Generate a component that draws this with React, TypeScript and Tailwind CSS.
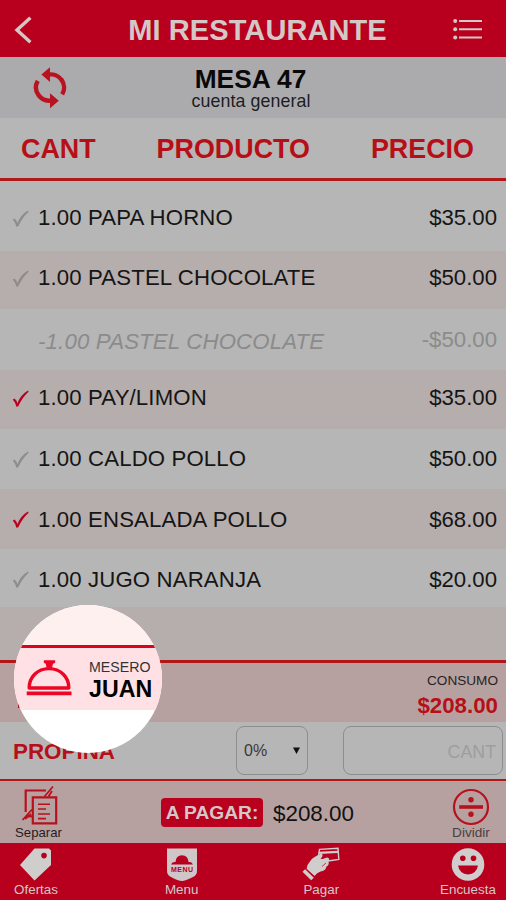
import React from 'react'

const items = [
    { name: '1.00 PAPA HORNO', price: '$35.00', check: 'text-[#8d8d8d]', row: 'h-[70px] bg-[#b6b6b6] pt-[5px]' },
    { name: '1.00 PASTEL CHOCOLATE', price: '$50.00', check: 'text-[#928989]', row: 'h-[58px] bg-[#b6adad] pb-[3px]' },
    { name: '-1.00 PASTEL CHOCOLATE', price: '-$50.00', check: '', row: 'h-[61px] bg-[#b6b6b6] pt-[2px]' },
    { name: '1.00 PAY/LIMON', price: '$35.00', check: 'text-[#b9001f]', row: 'h-[59px] bg-[#b6adad] pb-[2px]' },
    { name: '1.00 CALDO POLLO', price: '$50.00', check: 'text-[#8d8d8d]', row: 'h-[60px] bg-[#b6b6b6] pt-px' },
    { name: '1.00 ENSALADA POLLO', price: '$68.00', check: 'text-[#b9001f]', row: 'h-[60px] bg-[#b6adad] pt-[2px]' },
    { name: '1.00 JUGO NARANJA', price: '$20.00', check: 'text-[#8d8d8d]', row: 'h-[58px] bg-[#b6b6b6] pt-[4px]' },
]

function Check({ className }: { className: string }) {
    return (
        <svg className={className} width="17" height="18" viewBox="0 0 17 18" fill="currentColor">
            <path d="M0.8 9.6 L2.6 8.6 Q4.6 10.4 5.3 13.2 Q9 4.6 16 0.6 L16.6 1.8 Q10.4 7.4 6.3 16.2 L4.4 16.8 Q3 12 0.8 9.6Z" />
        </svg>
    )
}

function Header() {
    return (
        <>
            <header className="grid h-[57px] grid-cols-[100px_1fr_100px] items-center bg-[#b8001e] text-[#d3c8c6]">
                <svg className="ml-[14px] mt-[2px]" width="20" height="28" viewBox="0 0 20 28" fill="none" stroke="currentColor" strokeWidth="3.4">
                    <path d="M16.4 1.8 L3 14 L16.4 26.2" />
                </svg>
                <h1 className="whitespace-nowrap pl-[9px] pt-[4px] text-center text-[29px] font-bold leading-none tracking-[0.1px]">MI RESTAURANTE</h1>
                <svg className="ml-[46px]" width="32" height="24" viewBox="0 0 32 24" fill="currentColor">
                    <circle cx="3.2" cy="4" r="2" />
                    <circle cx="3.2" cy="12.2" r="2" />
                    <circle cx="3.2" cy="20.5" r="2" />
                    <path d="M7 3h23v2H7zM7 11.2h23v2H7zM7 19.4h23v2H7z" />
                </svg>
            </header>

            <div className="grid h-[61px] grid-cols-[100px_1fr_100px] bg-[#ababae]">
                <svg className="ml-[33px] mt-[9px]" width="34" height="44" viewBox="0 0 34 44" fill="none" stroke="#b81321" strokeWidth="4.4">
                    <path d="M15 8.7 A13.2 13.2 0 0 1 29.2 28.4" />
                    <path d="M19 34.3 A13.2 13.2 0 0 1 4.8 14.8" />
                    <path d="M17 1.2 V16 L8.4 8.6Z M17 27.2 V42.3 L25.8 34.8Z" fill="#b81321" stroke="none" />
                </svg>
                <div className="text-center text-[#090909]">
                    <p className="pt-[9px] pr-[5px] text-[26.3px] font-bold leading-[26px]">MESA 47</p>
                    <p className="pr-[4px] text-[17.8px] leading-[18px] tracking-[0.1px] text-[#1d1d1f]">cuenta general</p>
                </div>
            </div>

            <div className="flex h-[63px] justify-between border-b-[3px] border-[#b01719] bg-[#b6b6b6] pl-[21px] pr-[32px] pt-px text-[26.9px] font-bold leading-[60px] text-[#b70f17]">
                <span>CANT</span>
                <span>PRODUCTO</span>
                <span>PRECIO</span>
            </div>
        </>
    )
}

// the highlighted bubble over the dimmed bill
function WaiterSpotlight() {
    return (
        <div className="absolute left-[14px] top-[605px] z-10 h-[148px] w-[148px] overflow-hidden rounded-full bg-white">
            <div className="h-[40px] bg-[#fff0f0]" />
            <div className="flex h-[65px] border-t-[3px] border-[#d9041b] bg-[#ffe1e5]">
                <svg className="ml-[12px] mt-[11px] shrink-0" width="47" height="38" viewBox="0 0 47 38" fill="none" stroke="#ed0525">
                    <path d="M3.2 29 C3 18 11.5 9.6 23 9.6 C34.5 9.6 43 18 42.8 29Z" strokeWidth="3.4" strokeLinejoin="round" />
                    <path d="M0.7 34.3 H45.5" strokeWidth="3.8" />
                    <path d="M18 1.2 H29 Q30.2 4.2 27 4.7 L26 9 H20.6 L19.8 4.7 Q17 4.2 18 1.2Z" fill="#ed0525" stroke="none" />
                </svg>
                <div className="ml-[16px] pt-[12px]">
                    <p className="text-[14.2px] leading-[15px] text-[#333]">MESERO</p>
                    <p className="pt-px text-[23.2px] font-bold leading-[26px] text-black">JUAN</p>
                </div>
            </div>
        </div>
    )
}

function Totals() {
    return (
        <>
            <div className="h-[53px] bg-[#b6adad]" />
            <div className="flex h-[62px] items-end justify-between border-t-[3px] border-[#b01719] bg-[#b7a1a0]">
                <span className="mb-[14px] ml-[18px] h-[4px] w-[3px] bg-[#b70f17]" />
                <div className="h-full pr-[8px] pt-[10px] text-right">
                    <p className="text-[13.6px] leading-[16px] text-[#292223]">CONSUMO</p>
                    <p className="pt-[4px] text-[22.3px] font-bold leading-[26px] text-[#b70f17]">$208.00</p>
                </div>
            </div>
            <div className="flex h-[59px] border-b-2 border-[#b01719] bg-[#b6b6b6] pt-[4px]">
                <span className="w-[236px] pl-[13px] pt-[11px] text-[22.4px] font-bold leading-[30px] text-[#b70f17]">PROPINA</span>
                <div className="flex h-[49px] w-[72px] items-center justify-between rounded-[8px] border-[1.5px] border-[#8c8e8f] px-[7px] text-[16px] text-[#393939]">
                    <span>0%</span>
                    <svg width="7" height="7" viewBox="0 0 7 7">
                        <path d="M0 0.5H7L3.5 7Z" fill="#111" />
                    </svg>
                </div>
                <div className="ml-[35px] flex h-[49px] w-[160px] items-center justify-end rounded-[8px] border-[1.5px] border-[#8c8e8f] pr-[6px] pt-[3px] text-[17.8px] text-[#9d9e9e]">
                    CANT
                </div>
            </div>
        </>
    )
}

function PayBar() {
    return (
        <div className="flex h-[62px] bg-[#b7a1a0]">
            <div className="flex w-[161px] flex-col pl-[15px] pt-[4px] text-[#242021]">
                <svg className="ml-[6px]" width="38" height="41" viewBox="0 0 38 41" fill="none" stroke="#b7111e" strokeWidth="2.2">
                    <path d="M4.7 27 V5.5 H25" />
                    <path d="M6 31.3 H11" />
                    <path d="M11.8 12.3 H35.2 V38.3 H11.8Z" />
                    <path d="M17 19.3H29M17 24H25M17 29H29M17 33.6H25" strokeWidth="1.6" />
                    <path d="M32 1.5 L23.5 11.5 M31 6 L27.5 11.5 M11 24.5 L1.5 35 M10 29 L4 34" strokeWidth="1.8" />
                </svg>
                <span className="text-[13.2px] leading-[14px]">Separar</span>
            </div>
            <div className="mt-[17px] flex h-[29px] w-[102px] items-center justify-center whitespace-nowrap rounded-[4px] bg-[#b9001f] pt-px text-[19.2px] font-bold text-[#d3c8c8]">A PAGAR:</div>
            <span className="ml-[10px] pt-[18px] text-[22.4px] leading-[30px] text-[#111]">$208.00</span>
            <div className="ml-auto mr-[16px] flex flex-col items-center pt-[7px] text-[#4a4041]">
                <svg width="38" height="38" viewBox="0 0 38 38" fill="none" stroke="#b7111e">
                    <circle cx="19" cy="19" r="17" strokeWidth="2.2" />
                    <path d="M7.2 19H31" strokeWidth="3.6" />
                    <circle cx="19" cy="11.8" r="2.7" fill="#b7111e" stroke="none" />
                    <circle cx="19" cy="26.3" r="2.7" fill="#b7111e" stroke="none" />
                </svg>
                <span className="text-[13.6px] leading-[14px]">Dividir</span>
            </div>
        </div>
    )
}

function BottomNav() {
    return (
        <nav className="flex h-[57px] justify-between bg-[#b8001e] pl-[13px] pr-[9px] pt-[4px] text-[13.4px] leading-[17px] text-[#d3c8c8]">
            <div className="flex w-[46px] flex-col items-center">
                <svg className="-ml-[2px]" width="34" height="34" viewBox="0 0 34 34">
                    <path fillRule="evenodd" fill="#d0cecd" d="M16.5 1.5 H31 L33 3.5 V18 L16.5 33.5 L2 18Z M26 5.8 A2.8 2.8 0 1 0 26 11.4 A2.8 2.8 0 1 0 26 5.8Z" />
                </svg>
                <span>Ofertas</span>
            </div>
            <div className="ml-[8px] flex w-[36px] flex-col items-center">
                <svg width="32" height="34" viewBox="0 0 32 34">
                    <path fill="#cfc7c7" d="M1 1.5H31V24 Q31 28 27 30 Q19 34 16 34 Q12 34 5 30 Q1 28 1 24Z" />
                    <path fill="#b8001e" d="M5 17.4 Q6.5 14.5 9.5 15 Q10 8.5 16 8.3 Q22 8.5 22.5 15 Q25.5 14.5 27 17.4Z" />
                    <text x="16" y="24.6" textAnchor="middle" textLength="22" fontSize="7" fontWeight="bold" fill="#b8001e">MENU</text>
                </svg>
                <span>Menu</span>
            </div>
            <div className="ml-[4px] flex w-[42px] flex-col items-center">
                <svg width="38" height="34" viewBox="0 0 38 34">
                    <path d="M17.5 2.4 L36 1.2 L36.8 12.5 L26 14 L16 12Z" fill="#b8001e" stroke="#d0cecd" strokeWidth="1.4" />
                    <path d="M17 5.8 L36 4.8" stroke="#d0cecd" strokeWidth="2.2" />
                    <path fill="#d0cecd" d="M4.5 22 Q5 17.5 9 13 Q12 9.5 19 6.8 Q21.5 7 20 10 L17.5 13 L25 10.5 Q28.5 11 26.5 14.5 Q27.5 18 24.5 19.5 Q23.5 24 18.5 24.5 Q15 25.5 12.5 29Z" />
                    <path d="M1.8 23.5 L10.5 32" stroke="#d0cecd" strokeWidth="3.8" />
                    <path d="M4.2 21.8 L12.6 29.8 M20 19.5 L24 16" stroke="#b8001e" strokeWidth="0.7" />
                </svg>
                <span>Pagar</span>
            </div>
            <div className="flex w-[58px] flex-col items-center">
                <svg width="34" height="34" viewBox="0 0 34 34">
                    <circle cx="17" cy="17.5" r="16.3" fill="#d0cecd" />
                    <g fill="#b8001e">
                        <circle cx="11.8" cy="11.3" r="2.8" />
                        <circle cx="22.5" cy="11.3" r="2.8" />
                        <path d="M7 18.5 H27 Q25.5 27 17 27.4 Q8.5 27 7 18.5Z" />
                    </g>
                </svg>
                <span>Encuesta</span>
            </div>
        </nav>
    )
}

export default function App() {
    return (
        <div className="relative h-[900px] w-[506px] overflow-hidden bg-[#b6b6b6] font-['Liberation_Sans',Arial,sans-serif]">
            <Header />
            <ul>
                {items.map((item, i) => (
                    <li key={i} className={'flex items-center pl-[12px] pr-[9px] text-[22.2px] leading-none ' + item.row + (item.check ? ' text-[#151515]' : ' text-[#8b8b8b]')}>
                        <span className="w-[26px]">{item.check && <Check className={item.check} />}</span>
                        <span className={item.check ? 'tracking-[0.14px]' : 'pt-[3px] italic tracking-[0.18px]'}>{item.name}</span>
                        <span className="ml-auto">{item.price}</span>
                    </li>
                ))}
            </ul>
            <Totals />
            <PayBar />
            <BottomNav />
            <WaiterSpotlight />
        </div>
    )
}
